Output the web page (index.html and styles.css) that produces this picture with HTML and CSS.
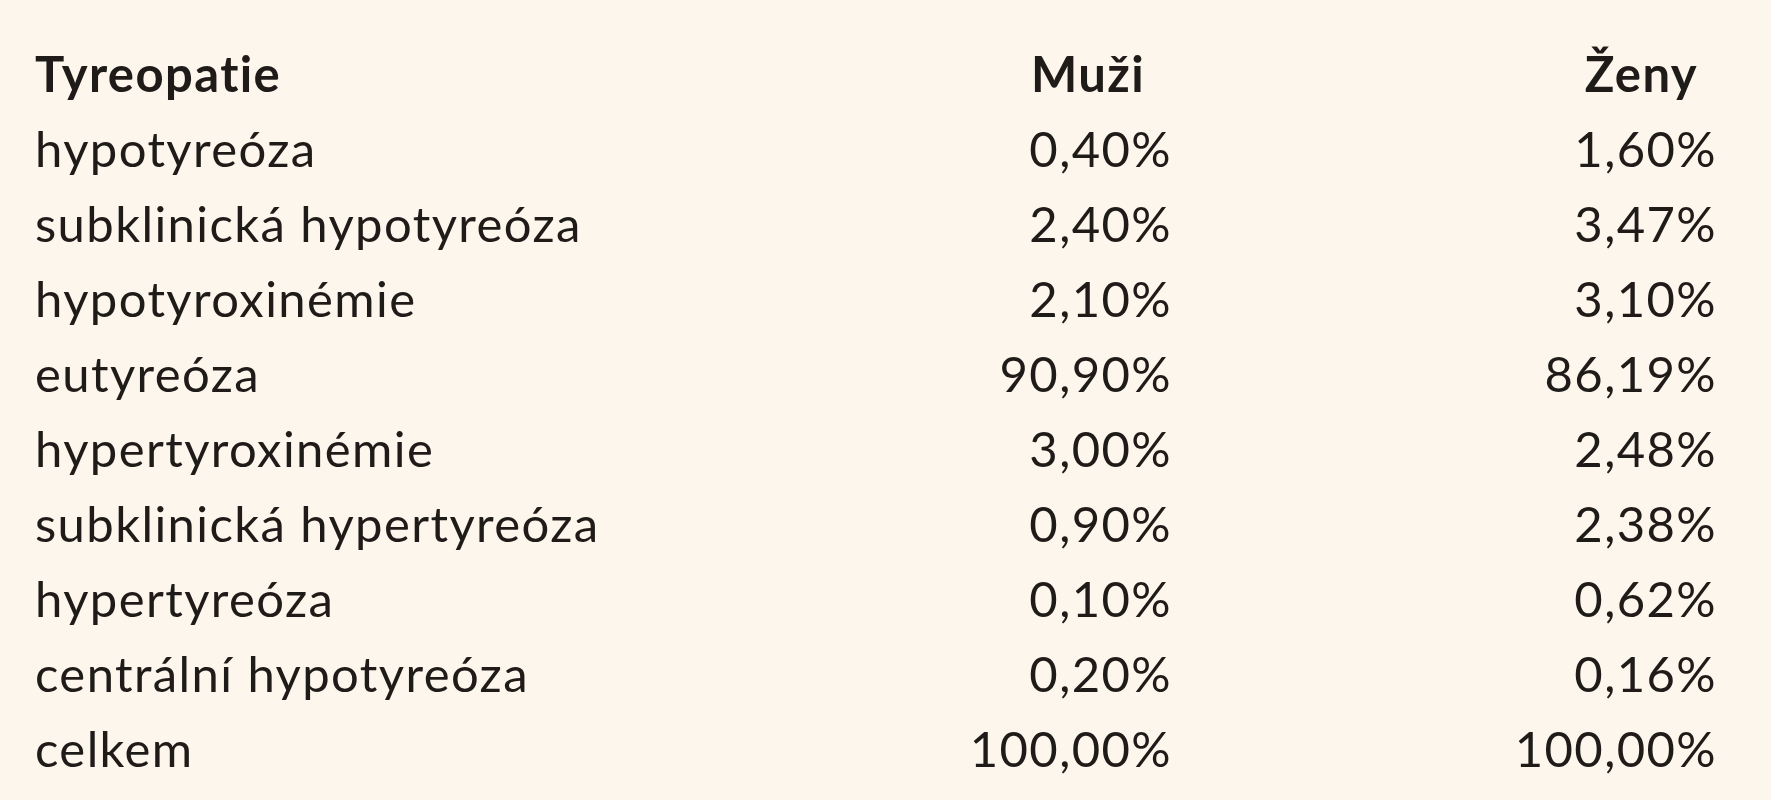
FILE: index.html
```html
<!DOCTYPE html>
<html lang="cs">
<head>
<meta charset="utf-8">
<title>Tyreopatie</title>
<link rel="stylesheet" href="styles.css">
</head>
<body>
<div class="table">
  <div class="row head">
    <div class="c1">Tyreopatie</div><div class="c2">Muži</div><div class="c3">Ženy</div>
  </div>
  <div class="row"><div class="c1">hypotyreóza</div><div class="c2">0,40%</div><div class="c3">1,60%</div></div>
  <div class="row"><div class="c1">subklinická hypotyreóza</div><div class="c2">2,40%</div><div class="c3">3,47%</div></div>
  <div class="row"><div class="c1">hypotyroxinémie</div><div class="c2">2,10%</div><div class="c3">3,10%</div></div>
  <div class="row"><div class="c1">eutyreóza</div><div class="c2">90,90%</div><div class="c3">86,19%</div></div>
  <div class="row"><div class="c1">hypertyroxinémie</div><div class="c2">3,00%</div><div class="c3">2,48%</div></div>
  <div class="row"><div class="c1">subklinická hypertyreóza</div><div class="c2">0,90%</div><div class="c3">2,38%</div></div>
  <div class="row"><div class="c1">hypertyreóza</div><div class="c2">0,10%</div><div class="c3">0,62%</div></div>
  <div class="row"><div class="c1">centrální hypotyreóza</div><div class="c2">0,20%</div><div class="c3">0,16%</div></div>
  <div class="row"><div class="c1">celkem</div><div class="c2">100,00%</div><div class="c3">100,00%</div></div>
</div>
</body>
</html>
```
FILE: styles.css
```css
html, body {
  margin: 0;
  padding: 0;
  background: #fdf6ed;
}
body {
  width: 1771px;
  height: 800px;
  overflow: hidden;
  font-family: Lato, "Liberation Sans", sans-serif;
  color: #1e1b18;
}
.table {
  padding: 36px 0 0 35px;
  display: flex;
  flex-direction: column;
}
.row {
  display: grid;
  grid-template-columns: 700px 437px 545px;
  height: 75px;
  font-size: 49px;
  line-height: 75px;
  letter-spacing: 1.4px;
  white-space: nowrap;
}
.c2, .c3 {
  text-align: right;
}
.head {
  font-weight: 700;
}
.head .c2 {
  padding-right: 27px;
}
.head .c3 {
  padding-right: 19px;
}
```
